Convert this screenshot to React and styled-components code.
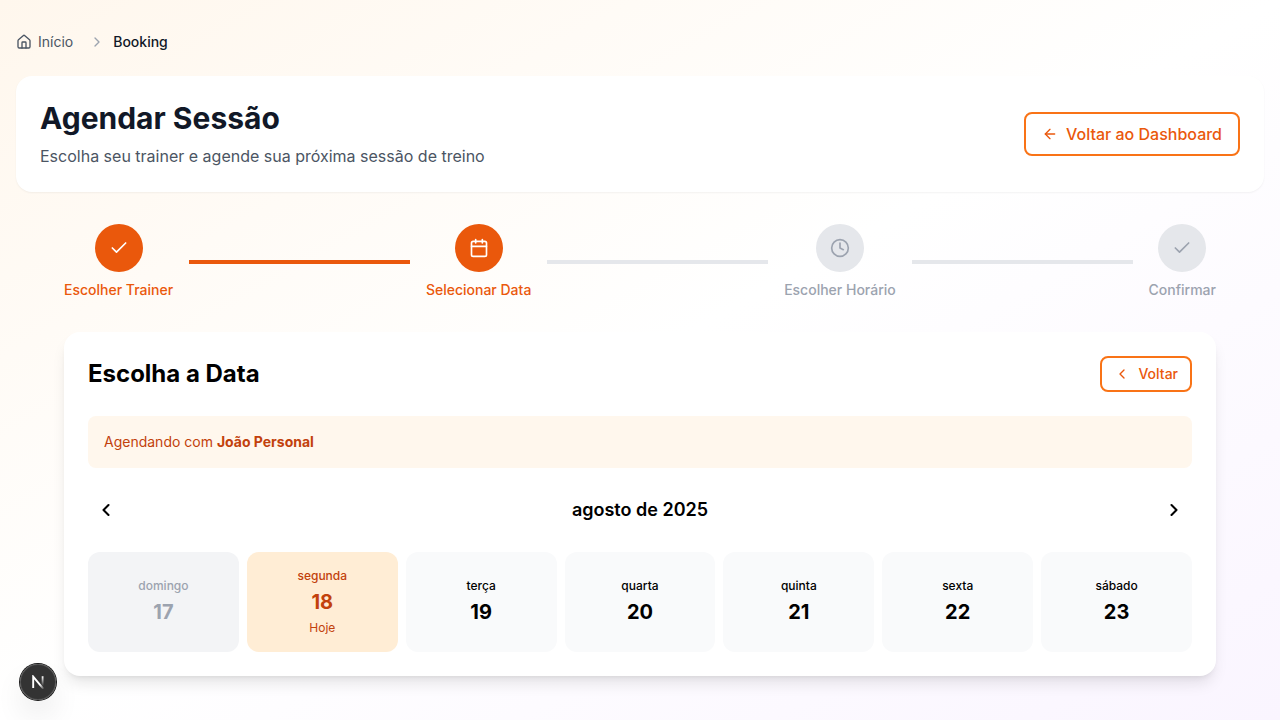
import React from "react";
import styled, { createGlobalStyle, css } from "styled-components";
import { House, ChevronRight, ChevronLeft, ArrowLeft, Check, Calendar, Clock } from "lucide-react";

const GlobalStyle = createGlobalStyle`
  *, *::before, *::after { box-sizing: border-box; }
  body {
    margin: 0;
    font-family: Inter, "Liberation Sans", sans-serif;
    font-size: 16px;
    line-height: 24px;
    color: #000;
  }
  h1, h2, h3, p, ol { margin: 0; padding: 0; }
  ol { list-style: none; }
  button { font: inherit; color: inherit; cursor: pointer; }
  svg { display: block; flex-shrink: 0; }
`;

const Page = styled.div`
  min-height: 100vh;
  padding: 32px 16px;
  background: linear-gradient(to bottom right, #fff7ed, #ffffff, #faf5ff);
`;

const Breadcrumb = styled.nav`
  margin-bottom: 24px;
  font-size: 14px;
  line-height: 20px;
`;

const CrumbList = styled.ol`
  display: flex;
  align-items: center;
`;

const CrumbItem = styled.li`
  display: flex;
  align-items: center;
  font-weight: 500;
  color: #111827;
`;

const CrumbLink = styled.a`
  display: flex;
  align-items: center;
  gap: 6px;
  font-weight: 400;
  color: #4b5563;
  text-decoration: none;
`;

const CrumbDivider = styled.li`
  margin: 0 8px 0 16px;
  color: #9ca3af;
`;

const Header = styled.header`
  display: flex;
  align-items: center;
  justify-content: space-between;
  gap: 16px;
  padding: 24px;
  margin-bottom: 32px;
  border-radius: 16px;
  background: #fff;
  box-shadow: 0 1px 2px rgba(0, 0, 0, 0.05);
`;

const Title = styled.h1`
  margin-bottom: 8px;
  font-size: 30px;
  line-height: 36px;
  font-weight: 700;
  color: #111827;
`;

const Subtitle = styled.p`
  color: #4b5563;
`;

const OutlineButton = styled.button`
  display: inline-flex;
  align-items: center;
  gap: 8px;
  border: 2px solid #f97316;
  border-radius: 8px;
  background: #fff;
  color: #ea580c;
  font-weight: 500;
  white-space: nowrap;
  ${({ $size }) =>
    $size === "small"
      ? css`
          height: 36px;
          padding: 0 12px;
          font-size: 14px;
          line-height: 20px;
        `
      : css`
          height: 44px;
          padding: 0 16px;
          font-size: 16px;
          line-height: 24px;
        `}
`;

const Content = styled.main`
  max-width: 1152px;
  margin: 0 auto;
`;

const Steps = styled.ol`
  display: flex;
  align-items: center;
  margin-bottom: 32px;
`;

const Step = styled.li`
  display: flex;
  flex-direction: column;
  align-items: center;
  gap: 8px;
  font-size: 14px;
  line-height: 20px;
  font-weight: 500;
  color: ${({ $active }) => ($active ? "#ea580c" : "#9ca3af")};
`;

const StepCircle = styled.span`
  display: flex;
  align-items: center;
  justify-content: center;
  width: 48px;
  height: 48px;
  border-radius: 50%;
  background: ${({ $active }) => ($active ? "#ea580c" : "#e5e7eb")};
  color: ${({ $active }) => ($active ? "#fff" : "#9ca3af")};
`;

const StepLine = styled.li`
  flex: 1;
  height: 4px;
  margin: 0 16px;
  background: ${({ $done }) => ($done ? "#ea580c" : "#e5e7eb")};
`;

const Card = styled.section`
  display: flex;
  flex-direction: column;
  gap: 24px;
  padding: 24px;
  border-radius: 16px;
  background: #fff;
  box-shadow: 0 10px 15px -3px rgba(0, 0, 0, 0.1), 0 4px 6px -4px rgba(0, 0, 0, 0.1);
`;

const Row = styled.div`
  display: flex;
  align-items: center;
  justify-content: space-between;
`;

const CardTitle = styled.h2`
  font-size: 24px;
  line-height: 32px;
  font-weight: 700;
`;

const Notice = styled.p`
  padding: 16px;
  border-radius: 8px;
  background: #fff7ed;
  color: #c2410c;
  font-size: 14px;
  line-height: 20px;
`;

const Month = styled.h3`
  font-size: 18px;
  line-height: 28px;
  font-weight: 600;
`;

const IconButton = styled.button`
  display: flex;
  padding: 8px;
  border: 0;
  border-radius: 8px;
  background: transparent;
`;

const Days = styled.div`
  display: grid;
  grid-template-columns: repeat(7, 1fr);
  gap: 8px;
`;

const dayTones = {
  past: css`background: #f3f4f6; color: #9ca3af;`,
  today: css`background: #ffedd5; color: #c2410c;`,
  open: css`background: #f9fafb; color: #000;`,
};

const Day = styled.button`
  display: flex;
  flex-direction: column;
  align-items: center;
  justify-content: center;
  gap: 4px;
  min-height: 100px;
  padding: 12px;
  border: 0;
  border-radius: 12px;
  ${({ $tone }) => dayTones[$tone]}
`;

const DayText = styled.span`
  font-size: 12px;
  line-height: 16px;
  font-weight: ${({ $strong }) => ($strong ? 500 : 400)};
`;

const DayNumber = styled.span`
  font-size: 20px;
  line-height: 28px;
  font-weight: 700;
`;

const DevBadge = styled.button`
  position: fixed;
  left: 20px;
  bottom: 20px;
  display: flex;
  align-items: center;
  justify-content: center;
  width: 36px;
  height: 36px;
  padding: 0;
  border: 0;
  border-radius: 50%;
  background: rgba(0, 0, 0, 0.8);
  box-shadow: 0 0 0 1px #171717, inset 0 0 0 1px rgba(255, 255, 255, 0.14),
    0 16px 32px -8px rgba(0, 0, 0, 0.24);
`;

const NextMark = () => (
  <svg width="14" height="14" viewBox="0 0 14 14" fill="none" aria-hidden="true">
    <defs>
      <linearGradient id="diagonal" gradientUnits="userSpaceOnUse" x1="9" y1="9.6" x2="13" y2="14.4">
        <stop stopColor="#fff" />
        <stop offset="1" stopColor="#fff" stopOpacity="0" />
      </linearGradient>
      <linearGradient id="stem" gradientUnits="userSpaceOnUse" x1="11.6" y1="1.4" x2="11.6" y2="11">
        <stop stopColor="#fff" />
        <stop offset="1" stopColor="#fff" stopOpacity="0" />
      </linearGradient>
    </defs>
    <path d="M2.2 13V1.6L12.4 13.9" stroke="url(#diagonal)" strokeWidth="1.9" />
    <path d="M11.6 1.2L11.61 12.8" stroke="url(#stem)" strokeWidth="1.8" />
  </svg>
);

const steps = [
  { label: "Escolher Trainer", icon: Check, active: true, done: true },
  { label: "Selecionar Data", icon: Calendar, active: true },
  { label: "Escolher Horário", icon: Clock },
  { label: "Confirmar", icon: Check },
];

const days = [
  { name: "domingo", number: 17, tone: "past" },
  { name: "segunda", number: 18, tone: "today" },
  { name: "terça", number: 19, tone: "open" },
  { name: "quarta", number: 20, tone: "open" },
  { name: "quinta", number: 21, tone: "open" },
  { name: "sexta", number: 22, tone: "open" },
  { name: "sábado", number: 23, tone: "open" },
];

export default function App() {
  return (
    <>
      <GlobalStyle />
      <Page>
        <Breadcrumb aria-label="Breadcrumb">
          <CrumbList>
            <CrumbItem>
              <CrumbLink href="#">
                <House size={16} />
                Início
              </CrumbLink>
            </CrumbItem>
            <CrumbDivider aria-hidden="true">
              <ChevronRight size={16} />
            </CrumbDivider>
            <CrumbItem aria-current="page">Booking</CrumbItem>
          </CrumbList>
        </Breadcrumb>
        <Header>
          <div>
            <Title>Agendar Sessão</Title>
            <Subtitle>Escolha seu trainer e agende sua próxima sessão de treino</Subtitle>
          </div>
          <OutlineButton type="button">
            <ArrowLeft size={16} />
            Voltar ao Dashboard
          </OutlineButton>
        </Header>
        <Content>
          <Steps>
            {steps.map(({ label, icon: Icon, active, done }, index) => (
              <React.Fragment key={label}>
                <Step $active={active}>
                  <StepCircle $active={active}>
                    <Icon size={20} />
                  </StepCircle>
                  {label}
                </Step>
                {index < steps.length - 1 && <StepLine $done={done} aria-hidden="true" />}
              </React.Fragment>
            ))}
          </Steps>
          <Card>
            <Row>
              <CardTitle>Escolha a Data</CardTitle>
              <OutlineButton type="button" $size="small">
                <ChevronLeft size={16} />
                Voltar
              </OutlineButton>
            </Row>
            <Notice>
              Agendando com <strong>João Personal</strong>
            </Notice>
            <Row>
              <IconButton type="button" aria-label="Semana anterior">
                <ChevronLeft size={20} strokeWidth={2.5} />
              </IconButton>
              <Month>agosto de 2025</Month>
              <IconButton type="button" aria-label="Próxima semana">
                <ChevronRight size={20} strokeWidth={2.5} />
              </IconButton>
            </Row>
            <Days>
              {days.map(({ name, number, tone }) => (
                <Day key={name} type="button" $tone={tone} disabled={tone === "past"}>
                  <DayText $strong>{name}</DayText>
                  <DayNumber>{number}</DayNumber>
                  {tone === "today" && <DayText>Hoje</DayText>}
                </Day>
              ))}
            </Days>
          </Card>
        </Content>
      </Page>
      <DevBadge type="button" aria-label="Next.js">
        <NextMark />
      </DevBadge>
    </>
  );
}
